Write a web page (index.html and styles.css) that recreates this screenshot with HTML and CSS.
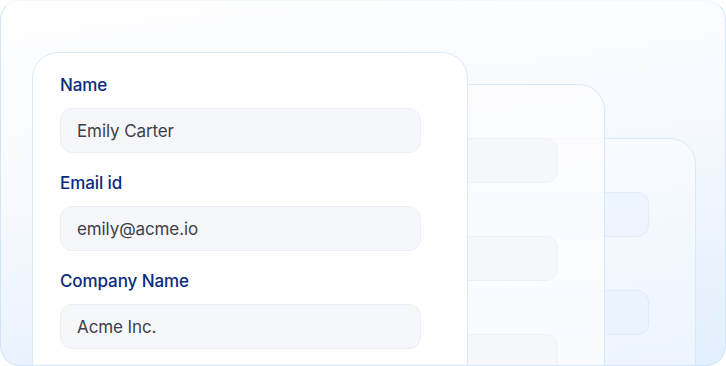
FILE: index.html
```html
<!DOCTYPE html>
<html lang="en">
<head>
    <meta charset="UTF-8">
    <meta name="viewport" content="width=device-width, initial-scale=1.0">
    <title>Contact form</title>
    <link rel="stylesheet" href="styles.css">
</head>
<body>
    <div class="panel">
        <!-- stacked cards behind the form -->
        <div class="ghost-card ghost-back">
            <div class="field"><span class="label">&nbsp;</span><div class="input"></div></div>
            <div class="field"><span class="label">&nbsp;</span><div class="input"></div></div>
            <div class="field"><span class="label">&nbsp;</span><div class="input"></div></div>
        </div>
        <div class="ghost-card ghost-mid">
            <div class="field"><span class="label">&nbsp;</span><div class="input"></div></div>
            <div class="field"><span class="label">&nbsp;</span><div class="input"></div></div>
            <div class="field"><span class="label">&nbsp;</span><div class="input"></div></div>
        </div>

        <div class="form-card">
            <div class="field">
                <span class="label">Name</span>
                <div class="input">Emily Carter</div>
            </div>
            <div class="field">
                <span class="label">Email id</span>
                <div class="input">emily@acme.io</div>
            </div>
            <div class="field">
                <span class="label">Company Name</span>
                <div class="input">Acme Inc.</div>
            </div>
        </div>
    </div>
</body>
</html>
```

FILE: styles.css
```css
:root {
    --label: #0a2b7c;
    --text: #3e4047;
    --card-border: #d9e9fb;
    --input-bg: #f6f7fb;
    --input-border: #eceef3;
}

body {
    margin: 0;
    font-family: 'Inter', sans-serif;
    background: #fff;
}

.panel {
    position: relative;
    width: 726px;
    height: 366px;
    box-sizing: border-box;
    padding: 51px 0 0 31px;
    border: 1px solid #d3e5f9;
    border-top-color: #f4f8fd;
    border-radius: 20px;
    overflow: hidden;
    background: linear-gradient(172deg, #ffffff 0%, #f6f9fe 45%, #e2effd 100%);
}

/* --- Cards --- */
.form-card,
.ghost-card {
    width: 436px;
    height: 400px;
    box-sizing: border-box;
    padding: 21px 46px 0 27px;
    border: 1px solid var(--card-border);
    border-radius: 26px;
    display: flex;
    flex-direction: column;
    gap: 19px;
}

.form-card { position: relative; z-index: 3; background: #fff; }

.ghost-card { position: absolute; }
.ghost-mid { left: 168px; top: 83px; padding-top: 19px; z-index: 2; background: rgba(252, 253, 255, 0.78); }
.ghost-back { left: 259px; top: 137px; padding-top: 19px; z-index: 1; background: rgba(255, 255, 255, 0.35); }

.field { display: flex; flex-direction: column; gap: 12px; }

.label {
    font-size: 17px;
    line-height: 22px;
    font-weight: 500;
    color: var(--label);
    letter-spacing: -0.1px;
}

.input {
    height: 45px;
    box-sizing: border-box;
    padding: 0 16px;
    display: flex;
    align-items: center;
    background: var(--input-bg);
    border: 1px solid var(--input-border);
    border-radius: 12px;
    font-size: 17px;
    color: var(--text);
    letter-spacing: -0.1px;
}

.ghost-mid .input { background: #f6f7fa; border-color: #eef0f4; }
.ghost-back .input { background: rgba(232, 241, 253, 0.6); border-color: rgba(220, 232, 248, 0.7); }
```
